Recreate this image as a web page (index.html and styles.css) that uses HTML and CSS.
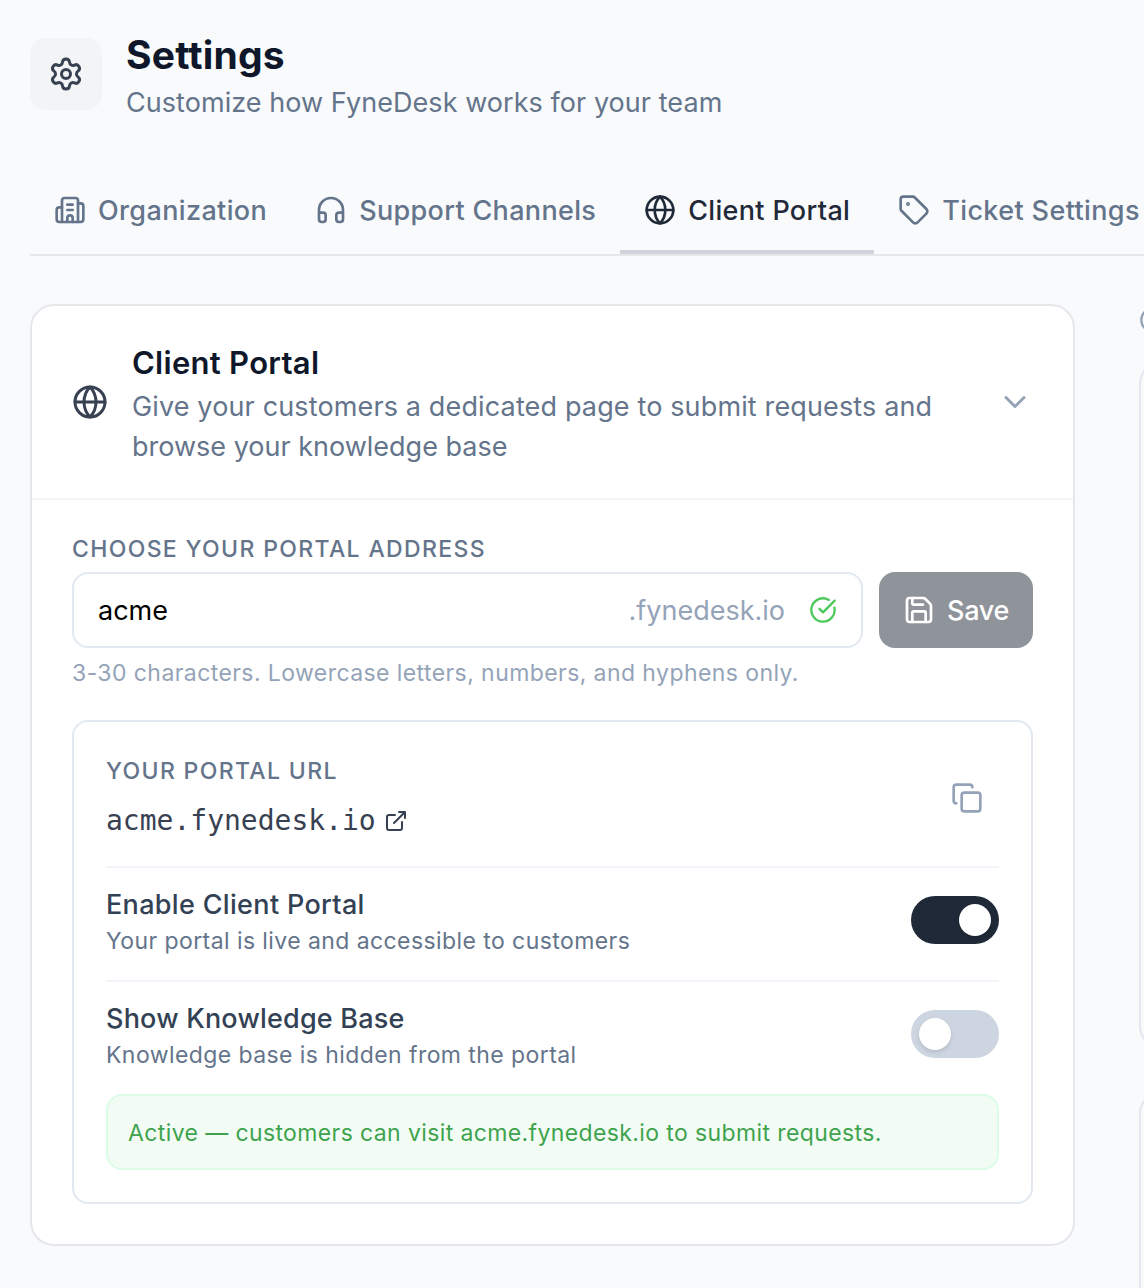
FILE: index.html
```
<!DOCTYPE html>
<html lang="en">
<head>
<meta charset="utf-8">
<title>Settings</title>
<link rel="stylesheet" href="styles.css">
</head>
<body>
<div class="page">
  <header class="page-header">
    <div class="page-icon">
      <svg class="icon icon-36" viewBox="0 0 24 24"><path d="M9.671 4.136a2.34 2.34 0 0 1 4.659 0 2.34 2.34 0 0 0 3.319 1.915 2.34 2.34 0 0 1 2.33 4.033 2.34 2.34 0 0 0 0 3.831 2.34 2.34 0 0 1-2.33 4.033 2.34 2.34 0 0 0-3.319 1.915 2.34 2.34 0 0 1-4.659 0 2.34 2.34 0 0 0-3.32-1.915 2.34 2.34 0 0 1-2.33-4.033 2.34 2.34 0 0 0 0-3.831A2.34 2.34 0 0 1 6.35 6.051a2.34 2.34 0 0 0 3.319-1.915"/><circle cx="12" cy="12" r="3"/></svg>
    </div>
    <div>
      <h1 class="page-title">Settings</h1>
      <p class="page-subtitle">Customize how FyneDesk works for your team</p>
    </div>
  </header>

  <nav class="tabs">
    <a class="tab">
      <svg class="icon icon-32" viewBox="0 0 24 24"><path d="M10 12h4M10 8h4M14 21v-3a2 2 0 0 0-4 0v3"/><path d="M6 10H4a2 2 0 0 0-2 2v7a2 2 0 0 0 2 2h16a2 2 0 0 0 2-2V9a2 2 0 0 0-2-2h-2"/><path d="M6 21V5a2 2 0 0 1 2-2h8a2 2 0 0 1 2 2v16"/></svg>
      <span class="tab-org">Organization</span>
    </a>
    <a class="tab">
      <svg class="icon icon-32" viewBox="0 0 24 24"><path d="M3 14h3a2 2 0 0 1 2 2v3a2 2 0 0 1-2 2H5a2 2 0 0 1-2-2v-7a9 9 0 0 1 18 0v7a2 2 0 0 1-2 2h-1a2 2 0 0 1-2-2v-3a2 2 0 0 1 2-2h3"/></svg>
      <span>Support Channels</span>
    </a>
    <a class="tab tab-active">
      <svg class="icon icon-32" viewBox="0 0 24 24"><circle cx="12" cy="12" r="10"/><path d="M12 2a14.5 14.5 0 0 0 0 20 14.5 14.5 0 0 0 0-20M2 12h20"/></svg>
      <span>Client Portal</span>
    </a>
    <a class="tab">
      <svg class="icon icon-32" viewBox="0 0 24 24"><path d="M12.586 2.586A2 2 0 0 0 11.172 2H4a2 2 0 0 0-2 2v7.172a2 2 0 0 0 .586 1.414l8.704 8.704a2.426 2.426 0 0 0 3.42 0l6.58-6.58a2.426 2.426 0 0 0 0-3.42z"/><circle cx="7.5" cy="7.5" r=".5" fill="currentColor"/></svg>
      <span class="tab-ticket">Ticket Settings</span>
    </a>
  </nav>

  <main class="content">
    <section class="card">
      <div class="card-header">
        <svg class="icon icon-36" viewBox="0 0 24 24"><circle cx="12" cy="12" r="10"/><path d="M12 2a14.5 14.5 0 0 0 0 20 14.5 14.5 0 0 0 0-20M2 12h20"/></svg>
        <div class="card-heading">
          <h2 class="card-title">Client Portal</h2>
          <p class="card-desc"><span class="desc-lead">Give your customers a dedicated page to submit requests and</span><br>browse your knowledge base</p>
        </div>
        <svg class="icon icon-36 chevron" viewBox="0 0 24 24"><path d="m6 9 6 6 6-6"/></svg>
      </div>

      <div class="card-body">
        <label class="label">CHOOSE YOUR PORTAL ADDRESS</label>
        <div class="address-row">
          <div class="address-field">
            <span class="address-value">acme</span>
            <span class="address-suffix">.fynedesk.io</span>
            <svg class="icon icon-28 ok" viewBox="0 0 24 24"><path d="M21.801 10A10 10 0 1 1 17 3.335"/><path d="m9 11 3 3L22 4"/></svg>
          </div>
          <button class="save">
            <svg class="icon icon-32" viewBox="0 0 24 24"><path d="M15.2 3a2 2 0 0 1 1.4.6l3.8 3.8a2 2 0 0 1 .6 1.4V19a2 2 0 0 1-2 2H5a2 2 0 0 1-2-2V5a2 2 0 0 1 2-2z"/><path d="M17 21v-7a1 1 0 0 0-1-1H8a1 1 0 0 0-1 1v7M7 3v4a1 1 0 0 0 1 1h7"/></svg>
            <span>Save</span>
          </button>
        </div>
        <p class="hint">3-30 characters. Lowercase letters, numbers, and hyphens only.</p>

        <div class="panel">
          <div class="url-row">
            <div>
              <div class="label">YOUR PORTAL URL</div>
              <a class="url"><span>acme.fynedesk.io</span><svg class="icon icon-24" viewBox="0 0 24 24"><path d="M15 3h6v6M10 14 21 3M18 13v6a2 2 0 0 1-2 2H5a2 2 0 0 1-2-2V8a2 2 0 0 1 2-2h6"/></svg></a>
            </div>
            <svg class="icon icon-32 copy" viewBox="0 0 24 24"><rect x="8" y="8" width="14" height="14" rx="2"/><path d="M4 16c-1.1 0-2-.9-2-2V4c0-1.1.9-2 2-2h10c1.1 0 2 .9 2 2"/></svg>
          </div>
          <div class="setting">
            <div>
              <div class="setting-name">Enable Client Portal</div>
              <div class="setting-desc">Your portal is live and accessible to customers</div>
            </div>
            <div class="toggle toggle-on"><div class="knob"></div></div>
          </div>
          <div class="setting">
            <div>
              <div class="setting-name setting-name-tight">Show Knowledge Base</div>
              <div class="setting-desc">Knowledge base is hidden from the portal</div>
            </div>
            <div class="toggle"><div class="knob"></div></div>
          </div>
          <div class="notice">Active — customers can visit acme.fynedesk.io to submit requests.</div>
        </div>
      </div>
    </section>

    <aside class="side">
      <div class="side-head"><svg class="icon icon-28" viewBox="0 0 24 24"><circle cx="12" cy="12" r="10"/></svg></div>
      <div class="side-card side-card-first"></div>
      <div class="side-card side-card-second"></div>
    </aside>
  </main>
</div>
</body>
</html>
```
FILE: styles.css
```
* { box-sizing: border-box; }
body {
  margin: 0;
  background: #f9fafc;
  color: #64748b;
  font-family: Inter, "Liberation Sans", sans-serif;
  font-size: 27px;
}
h1, h2, p { margin: 0; font-weight: 400; }
.page { width: 1144px; height: 1288px; padding: 31px 0 0 30px; overflow: hidden; }
.icon { flex: none; display: block; fill: none; stroke: currentColor; stroke-width: 2; stroke-linecap: round; stroke-linejoin: round; }
.icon-24 { width: 24px; height: 24px; }
.icon-28 { width: 28px; height: 28px; }
.icon-32 { width: 32px; height: 32px; }
.icon-36 { width: 36px; height: 36px; }

.page-header { display: flex; gap: 24px; height: 135px; }
.page-icon { width: 72px; height: 72px; margin-top: 7px; border-radius: 16px; background: #f3f4f6; color: #374151; display: flex; align-items: center; justify-content: center; }
.page-title { font-size: 39px; line-height: 48px; font-weight: 700; letter-spacing: .2px; color: #0f172a; }
.page-subtitle { line-height: 40px; margin-top: 4px; letter-spacing: .055px; }

.tabs { display: flex; height: 90px; border-bottom: 2px solid #e5e7eb; white-space: nowrap; }
.tab { display: flex; flex: none; align-items: center; gap: 12px; padding: 4px 24px 0; border-bottom: 4px solid transparent; font-weight: 500; letter-spacing: .33px; }
.tab-active { color: #1f2937; border-bottom-color: #d1d5db; }
.tab-org { letter-spacing: .37px; }
.tab-ticket { letter-spacing: .38px; }

.content { display: flex; gap: 64px; margin-top: 48px; }
.card { flex: none; width: 1045px; height: 942px; border: 2px solid #e5e7eb; border-radius: 24px; background: #fff; }
.card-header { display: flex; align-items: center; gap: 24px; height: 194px; padding: 0 40px; border-bottom: 2px solid #f3f4f6; color: #374151; white-space: nowrap; }
.card-heading { flex: 1; padding-top: 2px; }
.card-title { font-size: 31px; line-height: 48px; font-weight: 600; letter-spacing: .28px; color: #0f172a; }
.card-desc { line-height: 40px; color: #64748b; }
.desc-lead { letter-spacing: .14px; }
.chevron { color: #94a3b8; }

.card-body { padding: 33px 40px 0; }
.label { display: block; font-size: 23px; line-height: 32px; font-weight: 500; letter-spacing: 1.35px; }
.address-row { display: flex; gap: 16px; margin-top: 7px; }
.address-field { flex: 1; display: flex; align-items: center; height: 76px; padding: 0 24px; border: 2px solid #e2e8f0; border-radius: 16px; }
.address-value { flex: 1; color: #000; }
.address-suffix { color: #94a3b8; margin-right: 24px; }
.ok { color: #4cc75c; }
.save { display: flex; align-items: center; gap: 12px; width: 154px; height: 76px; padding: 0 24px; border: 0; border-radius: 16px; background: #8f939a; color: #fff; font: inherit; font-weight: 500; letter-spacing: -.3px; }
.hint { margin-top: 9px; font-size: 23px; line-height: 32px; letter-spacing: .42px; color: #94a3b8; white-space: nowrap; }

.panel { height: 484px; margin-top: 31px; padding: 32px; border: 2px solid #e2e8f0; border-radius: 16px; }
.url-row { display: flex; justify-content: space-between; height: 112px; padding-top: 1px; }
.url { display: flex; align-items: center; gap: 8px; height: 40px; margin-top: 13px; font-family: "DejaVu Sans Mono", monospace; font-size: 28px; color: #374151; }
.url .icon { margin-top: 2px; }
.copy { margin: 27px 16px 0 0; color: #94a3b8; }
.setting { display: flex; justify-content: space-between; height: 114px; padding-top: 17px; border-top: 2px solid #f1f5f9; white-space: nowrap; }
.setting-name { line-height: 40px; font-weight: 500; letter-spacing: .33px; color: #334155; }
.setting-name-tight { letter-spacing: .2px; }
.setting-desc { font-size: 23px; line-height: 32px; letter-spacing: .42px; }
.toggle { width: 88px; height: 48px; margin-top: 11px; padding: 8px; border-radius: 24px; background: #cdd5e1; display: flex; }
.toggle-on { background: #1f2937; justify-content: flex-end; }
.knob { width: 32px; height: 32px; border-radius: 50%; background: #fff; box-shadow: 0 2px 4px rgba(0, 0, 0, .12); }
.notice { height: 76px; padding: 1px 20px 0; border: 2px solid #dcfce7; border-radius: 16px; background: #f2fcf5; color: #3fa34d; font-size: 23px; line-height: 72px; letter-spacing: .385px; white-space: nowrap; }

.side { flex: none; width: 400px; color: #94a3b8; }
.side-head { height: 56px; padding-top: 2px; }
.side-card { border: 2px solid #e2e8f0; border-radius: 24px; }
.side-card-first { height: 690px; }
.side-card-second { height: 300px; margin-top: 40px; }
```
